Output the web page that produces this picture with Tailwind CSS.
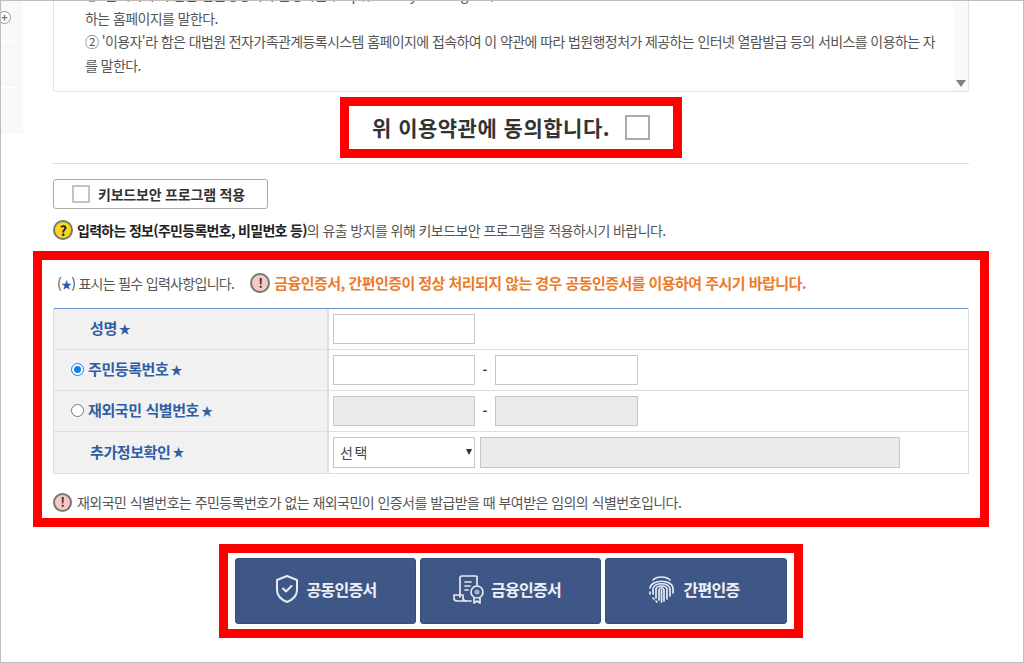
<!DOCTYPE html>
<html lang="ko">
<head>
    <meta charset="UTF-8">
    <meta name="viewport" content="width=device-width, initial-scale=1.0">
    <title>전자가족관계등록시스템</title>
    <script src="https://cdn.jsdelivr.net/npm/@tailwindcss/browser@4"></script>
</head>
<body class="bg-white">
    <div class="relative h-[663px] w-[1024px] overflow-hidden border border-[#bdbdbd] bg-white font-['Noto_Sans_CJK_KR','Noto_Sans',sans-serif] text-[#444]">
        <!-- left side menu stub -->
        <div class="absolute left-0 top-0 h-[132px] w-[22px] bg-[#f8f8f8]">
            <div class="absolute left-[-3px] top-[10px] flex h-[13px] w-[13px] items-center justify-center rounded-full border border-[#999] bg-white text-[11px] font-bold leading-none text-[#777]">+</div>
            <div class="absolute left-0 top-[40px] h-px w-[19px] bg-white"></div>
            <div class="absolute left-0 top-[86px] h-px w-[19px] bg-white"></div>
        </div>

        <div class="ml-[52px] w-[916px]">
            <!-- terms box -->
            <div class="relative h-[91px] overflow-hidden rounded-b-[3px] border border-t-0 border-[#e2e2e2] pl-[31px] pr-[18px] text-[14px] leading-[23.5px] tracking-[-0.6px] text-[#555]">
                <div class="mt-[-18px]">① '홈페이지'라 함은 법원행정처가 운영하는 (http://efamily.scourt.go.kr)</div>
                <div>하는 홈페이지를 말한다.</div>
                <div>② '이용자'라 함은 대법원 전자가족관계등록시스템 홈페이지에 접속하여 이 약관에 따라 법원행정처가 제공하는 인터넷 열람발급 등의 서비스를 이용하는 자</div>
                <div>를 말한다.</div>
                <div class="absolute bottom-0 right-0 top-0 w-[15px] bg-[#fafafa]">
                    <div class="absolute bottom-[4px] left-[3px] h-0 w-0 border-x-[5px] border-t-[7px] border-x-transparent border-t-[#808080]"></div>
                </div>
            </div>

            <!-- agree -->
            <div class="mt-[5px] flex justify-center">
                <div class="flex h-[61px] w-[342px] items-center justify-center gap-[15px] border-[9px] border-[#ff0000]">
                    <span class="text-[21px] font-bold tracking-[0.5px] text-[#333]">위 이용약관에 동의합니다.</span>
                    <span class="h-[25px] w-[25px] border-2 border-[#aaa] bg-white"></span>
                </div>
            </div>
            <div class="mt-[5px] h-px bg-[#dcdcdc]"></div>

            <!-- keyboard security -->
            <div class="mt-[15px] flex h-[30px] w-[215px] items-center gap-[8px] rounded-[3px] border border-[#aaa] pl-[18px] text-[14px] font-bold tracking-[-0.2px] text-[#333]">
                <span class="h-[18px] w-[18px] border-2 border-[#c4c4c4] bg-white"></span>
                키보드보안 프로그램 적용
            </div>
            <div class="mt-[10px] flex h-[22px] items-center gap-[4px] text-[14px] tracking-[-0.58px] text-[#555]">
                <span class="flex h-[20px] w-[20px] items-center justify-center rounded-full border-2 border-[#777] bg-[#fbd61e] text-[14px] font-bold text-[#222]">?</span>
                <span><b class="font-bold tracking-[-0.7px] text-[#222]">입력하는 정보(주민등록번호, 비밀번호 등)</b>의 유출 방지를 위해 키보드보안 프로그램을 적용하시기 바랍니다.</span>
            </div>
        </div>

        <!-- form section -->
        <div class="ml-[32px] mt-[10px] h-[276px] w-[956px] border-[9px] border-[#ff0000] px-[11px] pt-[11px]">
            <div class="flex h-[24px] items-center text-[14px] tracking-[-0.7px]">
                <span class="ml-[4px] text-[#555]">(<span class="text-[11px] text-[#2a5aa5]">★</span>)<span class="ml-[3px]">표시는 필수 입력사항입니다.</span></span>
                <span class="ml-[16px] flex h-[20px] w-[20px] items-center justify-center rounded-full border-2 border-[#777] bg-[#f6c9c2] text-[13px] font-bold text-[#333]">!</span>
                <span class="ml-[4px] text-[15px] font-bold tracking-[-0.55px] text-[#ec7a2b]">금융인증서, 간편인증이 정상 처리되지 않는 경우 공동인증서를 이용하여 주시기 바랍니다.</span>
            </div>
            <div class="mt-[13px] w-[916px] border-x border-b border-[#dedede]">
                <div class="h-px bg-[#6f94d6]"></div>
                <div class="flex h-[41px] border-b border-[#dedede]">
                    <div class="flex w-[275px] items-center border-r-2 border-[#dedede] bg-[#f1f1f1] pb-[1px] pl-[36px] text-[15px] font-bold tracking-[-0.4px] text-[#2f5ea5]">성명<span class="ml-[2px] text-[12px]">★</span></div>
                    <div class="flex items-center pl-[4px]">
                        <span class="h-[30px] w-[142px] border border-[#c6c6c6] bg-white"></span>
                    </div>
                </div>
                <div class="flex h-[41px] border-b border-[#dedede]">
                    <div class="flex w-[275px] items-center border-r-2 border-[#dedede] bg-[#f1f1f1] pb-[1px] pl-[17px] text-[15px] font-bold tracking-[-0.4px] text-[#2f5ea5]">
                        <span class="mr-[4px] flex h-[13px] w-[13px] items-center justify-center rounded-full border border-[#1a7de0] bg-white"><span class="h-[7px] w-[7px] rounded-full bg-[#1a7de0]"></span></span>주민등록번호<span class="ml-[2px] text-[12px]">★</span>
                    </div>
                    <div class="flex items-center pl-[4px]">
                        <span class="h-[30px] w-[142px] border border-[#c6c6c6] bg-white"></span>
                        <span class="w-[20px] text-center text-[13px] font-bold text-[#333]">-</span>
                        <span class="h-[30px] w-[143px] border border-[#c6c6c6] bg-white"></span>
                    </div>
                </div>
                <div class="flex h-[41px] border-b border-[#dedede]">
                    <div class="flex w-[275px] items-center border-r-2 border-[#dedede] bg-[#f1f1f1] pb-[1px] pl-[17px] text-[15px] font-bold tracking-[-0.4px] text-[#2f5ea5]">
                        <span class="mr-[4px] h-[13px] w-[13px] rounded-full border border-[#767676] bg-white"></span>재외국민 식별번호<span class="ml-[2px] text-[12px]">★</span>
                    </div>
                    <div class="flex items-center pl-[4px]">
                        <span class="h-[30px] w-[142px] border border-[#c6c6c6] bg-[#ebebeb]"></span>
                        <span class="w-[20px] text-center text-[13px] font-bold text-[#333]">-</span>
                        <span class="h-[30px] w-[143px] border border-[#c6c6c6] bg-[#ebebeb]"></span>
                    </div>
                </div>
                <div class="flex h-[41px]">
                    <div class="flex w-[275px] items-center border-r-2 border-[#dedede] bg-[#f1f1f1] pb-[1px] pl-[36px] text-[15px] font-bold tracking-[-0.4px] text-[#2f5ea5]">추가정보확인<span class="ml-[2px] text-[12px]">★</span></div>
                    <div class="flex items-center pl-[4px]">
                        <span class="relative flex h-[31px] w-[142px] items-center border border-[#c6c6c6] bg-white pl-[6px] text-[14px] tracking-[1.6px] text-[#444]">선택
                            <span class="absolute right-[2px] top-[11px] h-0 w-0 border-x-[3.5px] border-t-[6px] border-x-transparent border-t-[#333]"></span>
                        </span>
                        <span class="ml-[5px] h-[31px] w-[420px] border border-[#c6c6c6] bg-[#ebebeb]"></span>
                    </div>
                </div>
            </div>
            <div class="mt-[17px] flex h-[22px] items-center gap-[5px] text-[14px] tracking-[-0.55px] text-[#555]">
                <span class="flex h-[19px] w-[19px] items-center justify-center rounded-full border-2 border-[#777] bg-[#f6c9c2] text-[13px] font-bold text-[#333]">!</span>
                재외국민 식별번호는 주민등록번호가 없는 재외국민이 인증서를 발급받을 때 부여받은 임의의 식별번호입니다.
            </div>
        </div>

        <!-- auth buttons -->
        <div class="ml-[218px] mt-[17px] flex h-[94px] w-[584px] gap-[4px] border-[9px] border-[#ff0000] pl-[7px] pt-[5px]">
            <div class="flex h-[66px] w-[181px] items-center justify-center gap-[6px] rounded-[3px] border border-[#34507f] bg-[#3e5787] pb-[5px] text-[16px] font-bold tracking-[-0.7px] text-[#eef1f6]">
                <svg class="h-[30px] w-[26px]" viewBox="0 0 26 30" fill="none" stroke="#e6eaf2" stroke-width="2" stroke-linecap="round" stroke-linejoin="round"><path d="M13 2 L23 6 V16 C23 22 18 26 13 28 C8 26 3 22 3 16 V6 Z"/><path d="M9 14.500 L12 17.500 L17.500 12"/></svg>
                공동인증서
            </div>
            <div class="flex h-[66px] w-[181px] items-center justify-center gap-[6px] rounded-[3px] border border-[#34507f] bg-[#3e5787] pb-[5px] pr-[8px] text-[16px] font-bold tracking-[-0.7px] text-[#eef1f6]">
                <svg class="h-[30px] w-[33px]" viewBox="0 0 33 30" fill="none" stroke="#e6eaf2" stroke-width="1.7" stroke-linecap="round" stroke-linejoin="round"><path d="M25 11 V3 Q25 2 24 2 H10 Q8 2 8 4 V23"/><path d="M2 21 H11 V24 Q11 27 14 27 H5 Q2 27 2 24 Z"/><path d="M14 27 H19"/><path d="M13 8 H19 M13 12 H18 M13 16 H16"/><circle cx="25" cy="18" r="6"/><circle cx="25" cy="18" r="2.500" fill="#a9b5cb" stroke="none"/><path d="M22 24 V29 L25 27 L28 29 V24"/></svg>
                금융인증서
            </div>
            <div class="flex h-[66px] w-[182px] items-center justify-center gap-[8px] rounded-[3px] border border-[#34507f] bg-[#3e5787] pb-[5px] pr-[4px] text-[16px] font-bold tracking-[-0.7px] text-[#eef1f6]">
                <svg class="h-[28px] w-[27px]" viewBox="0 0 27 28" fill="none" stroke="#e6eaf2" stroke-width="1.7" stroke-linecap="round"><path d="M5 5 C9 1 18 1 22 5"/><path d="M2 13 C3 4 24 4 25 13 V18"/><path d="M5 19 V14 C6 7 21 7 22 14 V21"/><path d="M8 23 V14 C9 10 18 10 19 14 V24"/><path d="M11 25 V15 C12 12 15 12 16 15 V26"/><path d="M13.500 15 V27"/><path d="M2 17 V19 M5 23 L6 24 M8 26 L9 27"/></svg>
                간편인증
            </div>
        </div>
    </div>
</body>
</html>
